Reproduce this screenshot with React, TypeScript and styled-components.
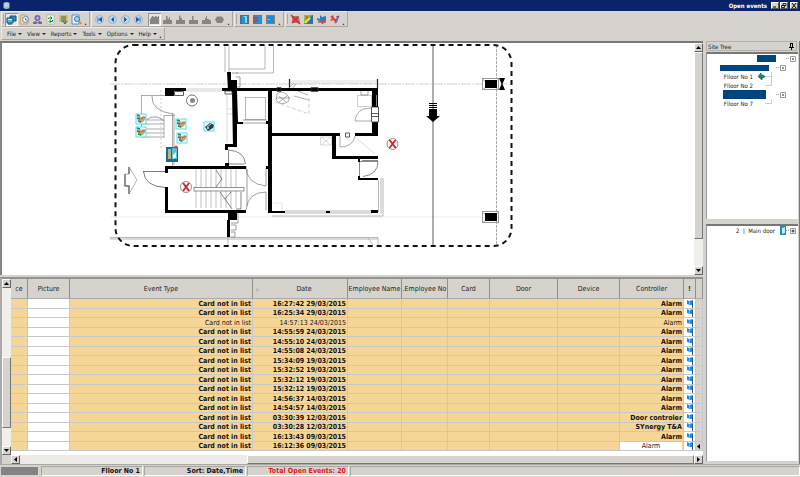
import React from "react";
import styled, { createGlobalStyle, css } from "styled-components";

const FACE = "#d6d3ce";
const NAVY = "#0a246a";

const GlobalStyle = createGlobalStyle`
  * { box-sizing: border-box; }
  body { margin: 0; background: ${FACE}; }
  body, button, table, input { font-family: "DejaVu Sans Condensed", "DejaVu Sans", sans-serif; font-size: 7px; color: #222; }
  button { border: 0; padding: 0; background: none; }
  svg { display: block; }
`;

const Window = styled.div`
  display: flex;
  flex-direction: column;
  min-height: 100vh;
  background: ${FACE};
`;

const TitleBar = styled.header`
  display: flex;
  align-items: center;
  height: 11px;
  padding: 0 2px;
  background: ${NAVY};
  color: #fff;
`;

const Title = styled.h1`
  flex: 1;
  margin: 0 3px 0 0;
  text-align: right;
  font-size: 6px;
  line-height: 11px;
`;

const CaptionButton = styled.button<{ $gap?: boolean }>`
  width: 8px;
  height: 7px;
  margin-left: ${(p) => (p.$gap ? 2 : 1)}px;
  background: ${FACE};
  border: 1px solid;
  border-color: #fff #555 #555 #fff;
`;

const Bars = styled.div`
  display: flex;
  flex-direction: column;
  align-items: flex-start;
  height: 30px;
`;

const BarRow = styled.div`
  display: flex;
  gap: 1px;
  padding-left: 1px;
`;

const ToolGroup = styled.div<{ $menu?: boolean }>`
  display: flex;
  align-items: center;
  height: ${(p) => (p.$menu ? 13 : 16)}px;
  padding: 0 1px;
  border: 1px solid;
  border-color: #eeece8 #aaa7a2 #aaa7a2 #eeece8;
`;

const Grip = styled.span`
  width: 1px;
  height: 10px;
  margin-right: 1px;
  background: #aaa7a2;
`;

const ToolButton = styled.button<{ $pressed?: boolean }>`
  display: flex;
  align-items: center;
  justify-content: center;
  width: 13px;
  height: 13px;
  ${(p) =>
    p.$pressed &&
    css`
      background: #e6e4e0;
      box-shadow: inset 1px 1px #96938e, inset -1px -1px #fff;
    `}
`;

const Spacer = styled.span`
  width: 3px;
`;

const MoreButton = styled.button`
  align-self: flex-end;
  width: 5px;
  height: 6px;
  font-weight: bold;
  line-height: 4px;
`;

const MenuButton = styled.button`
  display: flex;
  align-items: center;
  gap: 2px;
  padding: 0 1px 0 4px;
  font-size: 6px;
  line-height: 10px;
  &::after {
    content: "";
    border: 2px solid transparent;
    border-top-color: #222;
    border-bottom: 0;
  }
`;

const Body = styled.main`
  display: grid;
  grid-template-columns: minmax(0, 1fr) 94px;
  gap: 3px;
  flex: 1;
`;

const Column = styled.div`
  display: flex;
  flex-direction: column;
  min-width: 0;
`;

const MapPanel = styled.section`
  display: flex;
  flex: 1;
  min-height: 0;
  border-top: 2px solid #777a74;
  border-left: 2px solid #858585;
  background: #fff;
`;

const MapView = styled.div`
  flex: 1;
  overflow: hidden;
`;

const VScroll = styled.div`
  display: flex;
  flex-direction: column;
  flex: 0 0 9px;
  background: #f0efec;
`;

const HScroll = styled.div`
  display: flex;
  height: 9px;
  background: #ecebe8;
`;

const ScrollCorner = styled.div`
  height: 9px;
  background: ${FACE};
`;

const ScrollArrow = styled.button`
  display: flex;
  align-items: center;
  justify-content: center;
  flex: 0 0 9px;
  width: 9px;
  height: 9px;
  background: ${FACE};
  border: 1px solid;
  border-color: #fff #666 #666 #fff;
`;

const Track = styled.div<{ $grow: number }>`
  flex: ${(p) => p.$grow} 1 0;
`;

const Thumb = styled(Track)`
  background: ${FACE};
  border: 1px solid;
  border-color: #fff #777 #777 #fff;
`;

const EventsPanel = styled.section`
  display: flex;
  margin-top: 2px;
  border-top: 2px solid #95938e;
  border-left: 2px solid #aaa;
`;

const GridArea = styled.div`
  flex: 1;
  min-width: 0;
  background: #fff;
`;

const GridTable = styled.table`
  width: 100%;
  table-layout: fixed;
  border-collapse: separate;
  border-spacing: 0;
  margin-bottom: 4px;
`;

const Col = styled.col<{ $w?: number }>`
  ${(p) => p.$w && `width: ${p.$w}px;`}
`;

const HeadCell = styled.th`
  height: 20px;
  padding: 0;
  background: ${FACE};
  border-right: 1px solid #8f8f8f;
  border-bottom: 1px solid #aaa;
  font-weight: normal;
  white-space: nowrap;
  overflow: hidden;
`;

const SortHead = styled.span`
  display: grid;
  grid-template-columns: 8px 1fr;
  padding-right: 0;
  &::before {
    content: "▵";
    color: #999;
  }
`;

const Row = styled.tr<{ $read?: boolean }>`
  height: 9px;
  font-weight: ${(p) => (p.$read ? "normal" : "bold")};
  &:nth-child(odd) { height: 10px; }
`;

const Cell = styled.td<{ $tone?: "white" | "face" }>`
  padding: 0 1px 0 0;
  background: ${(p) => (p.$tone === "white" ? "#fff" : p.$tone === "face" ? FACE : "#f6d696")};
  border-right: 1px solid #c8c8c8;
  border-bottom: 1px solid #c8c8c8;
  text-align: right;
  line-height: 8px;
  white-space: nowrap;
  overflow: hidden;
  color: ${(p) => (p.$tone ? "#333" : "#111")};
`;

const CellInput = styled.input`
  display: block;
  width: 100%;
  height: 8px;
  padding: 0;
  border: 0;
  background: #fff;
  text-align: center;
`;

const Side = styled.aside`
  display: flex;
  flex-direction: column;
  border-right: 1px solid #777;
`;

const PaneTitle = styled.h2`
  display: flex;
  align-items: center;
  justify-content: space-between;
  height: 10px;
  margin: 0 2px 1px 0;
  padding: 0 2px 0 1px;
  border: 1px solid #b3b0ab;
  font-size: 6px;
  font-weight: normal;
`;

const TreePane = styled.div<{ $grow?: boolean }>`
  flex: ${(p) => (p.$grow ? 1 : "0 0 167px")};
  margin: 0 1px ${(p) => (p.$grow ? 3 : 5)}px 0;
  border-top: 2px solid #777;
  border-left: 1px solid #999;
  background: #fff;
`;

const Tree = styled.ul`
  margin: 0;
  padding: 0 2px 0 0;
  list-style: none;
  font-size: 6px;
`;

const TreeItem = styled.li<{ $indent?: number }>`
  display: flex;
  align-items: center;
  justify-content: flex-end;
  height: 9px;
  padding-right: ${(p) => p.$indent ?? 0}px;
`;

const Redacted = styled.span<{ $w: number; $h: number; $gap: number }>`
  width: ${(p) => p.$w}px;
  height: ${(p) => p.$h}px;
  margin-right: ${(p) => p.$gap}px;
  background: #00457c;
`;

const FloorName = styled.span<{ $gap: number }>`
  margin-right: ${(p) => p.$gap}px;
`;

const StatusBar = styled.footer`
  display: grid;
  grid-template-columns: 40px 102px 102px 102px 1fr;
  align-items: center;
  gap: 1px;
  height: 13px;
  border-top: 1px solid #aaa8a3;
`;

const StatusCell = styled.div<{ $alert?: boolean }>`
  height: 10px;
  padding-right: 2px;
  border: 1px solid;
  border-color: #a9a6a1 #fff #fff #a9a6a1;
  color: ${(p) => (p.$alert ? "#e01818" : "#111")};
  font-weight: bold;
  line-height: 8px;
  text-align: right;
  white-space: nowrap;
`;

const Progress = styled.div`
  height: 8px;
  margin: 0 2px 0 1px;
  background: #848284;
`;

const Arrow = ({ dir }: { dir: "up" | "down" | "left" | "right" }) => {
  const d = { up: "M0 4L2.5 1L5 4z", down: "M0 1L2.5 4L5 1z", left: "M4 0L1 2.5L4 5z", right: "M1 0L4 2.5L1 5z" }[dir];
  return (
    <svg width="5" height="5"><path d={d} fill="#000" /></svg>
  );
};

const Icon = ({ children }: { children: React.ReactNode }) => (
  <svg width="11" height="11" viewBox="0 0 11 11">{children}</svg>
);

const viewIcons: [string, React.ReactNode][] = [
  ["Open events", <><path d="M4 2h6v5H4z" fill="#2b8fc8" stroke="#174e76" /><path d="M1 4h6v5H1z" fill="#49bed1" stroke="#174e76" /><path d="M2 5.500h4" stroke="#c9f1f5" /><path d="M2 10h4" stroke="#333" /></>],
  ["Event log", <><path d="M2 1h5l2 2v7H1z" fill="#f1dfa0" stroke="#c9a75b" /><circle cx="6.5" cy="5.5" r="3" fill="#edf5ff" stroke="#6584b2" /><path d="M6.500 4v2h2" fill="none" stroke="#345" strokeWidth=".7" /></>],
  ["Users", <><circle cx="5.500" cy="4" r="3" fill="#7567b5" /><circle cx="5.500" cy="4" r="1.200" fill="#c9c0ec" /><path d="M1 10V8l3-1 1.500 1.500L7 7l3 1v2H7L5.500 9 4 10z" fill="#776b86" /></>],
  ["Refresh", <><path d="M2 1h7v9H2z" fill="#effbef" stroke="#8cb792" strokeWidth=".7" /><path d="M3.500 5V4h3M5.500 2.500L7 4 5.500 5.500M7.500 6v1.500h-3M5.500 6L4 7.500 5.500 9" stroke="#138a33" fill="none" /></>],
  ["Door", <><path d="M1 1h9v7H1z" fill="#e9bc36" /><path d="M3 2h3v6H3z" fill="#4e9ccf" /><path d="M7 2v7M5 7l2 3 2-3" stroke="#37713c" fill="none" /></>],
  ["Find", <><path d="M1 1h7v9H1z" fill="#e6f2ff" stroke="#4773b8" strokeWidth=".8" /><circle cx="6" cy="5" r="2.500" fill="#9edcf2" stroke="#4170a2" /><path d="M8 7l2.500 3" stroke="#e08432" strokeWidth="1.500" /></>],
];

const navPaths: [string, string][] = [
  ["First", "M4 3.500v4M7.500 3.500L5 5.500l2.500 2z"],
  ["Previous", "M6.500 3.500L4.500 5.500l2 2z"],
  ["Next", "M4.500 3.500l2 2-2 2z"],
  ["Last", "M7 3.500v4M3.500 3.500L6 5.500l-2.500 2z"],
];

const handPaths = [
  "M0 5h2V3h1V2h1.500v1H6V2h1.500v1H9V2h1v8H1V6z",
  "M1 6h3V2h1.500v3H7V3h1v3h2v4H1z",
  "M1 6h3V1.500h1.500V4H7v2h3v4H1z",
  "M1 6h3V2h1.500v4H10v4H1z",
  "M1 6h3V4h1V2h1v3h2v1h2v4H1z",
  "M3 2.500h5L10 5.500 8 9H3L1 5.500z",
];

const doorIcons: [string, React.ReactNode][] = [
  ["Open door", <><path d="M1 1h9v9H1z" fill="#616b77" /><path d="M4 2h4v7H4z" fill="#89d8fa" /><path d="M3 2l3 1v7L3 9z" fill="#149ae1" /></>],
  ["Lock door", <><path d="M1 1h9v9H1z" fill="#70747a" /><path d="M4 2h5v7H4z" fill="#2694d7" /><path d="M1 4h5M1 7h5M4 3l2 2-2 3" stroke="#cf3139" fill="none" /></>],
  ["Close door", <><path d="M1 1h9v9H1z" fill="#8a7c70" /><path d="M3 2h6v7H3z" fill="#178cdb" /><path d="M4 5v1" stroke="#fff" /></>],
];

const alarmIcons: [string, React.ReactNode][] = [
  ["Cancel alarm", <><path d="M2 2h7l1 7H2z" fill="#947d7c" /><path d="M1 1l9 9M8 3L2 9" stroke="#ef2222" strokeWidth="1.700" /></>],
  ["Map alarm", <><path d="M1 1h9v9H1z" fill="#7cc357" /><path d="M1 10l8-9h1v9z" fill="#2d72ad" /><path d="M3 2h2v3H3z" fill="#e55134" /><path d="M2 9l5-5" stroke="#eee348" strokeWidth="2" /></>],
  ["Device alarm", <><path d="M4 1l2 2 4-1v5L6 8 1 6V4l3 1z" fill="#287fbe" /><path d="M2 8h8M6 10l3-4" stroke="#dc3f42" strokeWidth="1.500" /></>],
  ["Confirm alarm", <><path d="M1 3l3-2 1 3 2 1 3-4-4 9-1-4-4 1 2-3z" fill="#ea3935" /><path d="M7 3l3-1-3 7" stroke="#4b5fa5" fill="none" /></>],
];

const Tools = ({ items }: { items: [string, React.ReactNode][] }) => (
  <>
    {items.map(([label, art]) => (
      <ToolButton key={label} aria-label={label} $pressed={label === "Open events"}><Icon>{art}</Icon></ToolButton>
    ))}
  </>
);

const HandReader = ({ x, y }: { x: number; y: number }) => (
  <g transform={`translate(${x} ${y})`}>
    <rect width="10" height="10" fill="#eaffff" stroke="#53dfe2" />
    <path d="M1 2l4 1 3-1 2 2-2 3-3 2-3-2z" fill="#cda276" />
    <path d="M1 1l3 1M1 4l3 1M2 7l3 1" stroke="#367e69" strokeWidth="1.500" />
    <path d="M5 5l4-2" stroke="#81583c" strokeWidth=".7" />
  </g>
);

const Disabled = ({ x, y }: { x: number; y: number }) => (
  <g transform={`translate(${x} ${y})`}>
    <circle r="5.500" fill="#fff" stroke="#777" strokeWidth=".8" />
    <path d="M-3-4L3 4M3-4L-3 4" stroke="#dc2229" strokeWidth="1.800" />
    <path d="M-2-4L4 4" stroke="#444" strokeWidth=".4" />
  </g>
);

const FloorPlan = () => (
  <svg width="691" height="232" viewBox="2 43 691 232" role="img" aria-label="Floor plan">
    <g fill="none" stroke="#bbb" strokeWidth=".7">
      <path d="M110 84h117M237 84h270" strokeDasharray="10 1 2 1" />
      <path d="M110 217h115M240 217h245" stroke="#e4e4e4" />
      <path d="M496.500 45v201" stroke="#888" strokeDasharray="3 1" />
      <path d="M225 45v27M229 45v27M229 69h36V45M273.500 45v28H236" stroke="#999" />
      <path d="M161 90v60" strokeDasharray="2 2" />
      <path d="M186 89h36M186 91h36" />
      <path d="M141.500 95.500v42M141 95.500h32M164 115.500h10v-2M172.500 113v54M174 115v50M164 115v23M142 120h22M142 124h22M142 129h22M142 133h22M142 137h22" stroke="#888" />
      <path d="M152 96q-1 15 21 18M146 120q10-7 18 1" stroke="#777" />
      <path d="M227 95v48M233 95v48M227 109h6M227 114h6" stroke="#ccc" />
      <rect x="245.500" y="97.500" width="20" height="22" stroke="#999" />
      <path d="M243 120h24M243 123h24" stroke="#777" />
      <path d="M228.500 150v14h16M228.500 150q16 1 17 14" stroke="#555" />
      <path d="M143 171.500h22M143.500 171.500q1 15 22 16" stroke="#444" />
      <path d="M196 169v39M201 169v39M206 169v39M211 169v39M216 169v39M221 169v39M226 169v39M231 169v39M236 169v39" stroke="#aaa" />
      <rect x="194" y="187.500" width="50" height="3.500" fill="#fff" stroke="#666" />
      <path d="M216 170l6 9-6 8M220 192l12 17M231 192l-6 7M241 192v17h-5" stroke="#555" />
      <path d="M246 166q0 18 20 20v-18M246 210q2-18 20-18v18M247 169v37" stroke="#777" />
      <path d="M236 77h4v10h-8M232 73h6M238 213v10h-7M231 225h5v5h-5M231 232h4v5h-4" stroke="#777" />
      <path d="M110 237.500h268v8M110 239h268M368 238l5 7M228 237v9" stroke="#999" />
      <path d="M289 81h89M290 83h88" stroke="#ccc" />
      <path d="M289.500 79v9M377.500 79v9" stroke="#222" strokeWidth="1.200" />
      <path d="M277 94q4-4 9 0t2 8q-8 4-12-2zM279 96l7 6M287 96l-8 6M276 98h14M290 91l6-7M286 91l8-8M294 96l15 4M298 91l10 4" stroke="#888" />
      <path d="M275 102l34 12V98" strokeDasharray="4 2" />
      <rect x="357.500" y="95.500" width="14" height="11" /><path d="M361 91v4h7v-4" stroke="#777" />
      <path d="M371 108q-15 0-16 13h16M340 136v11q13 0 15-11" stroke="#888" />
      <path d="M355 137l20 17M320.500 137h11v8h-11zM321 137l10 8M331 137l-10 8" stroke="#ccc" />
      <path d="M360 161.500h18q0 13-15 15M359.500 161v15M362 160.500h16" stroke="#555" />
      <path d="M378.500 180v32M383 178v38H272M381 178v36M285 211h87M285 213h87" stroke="#999" />
      <path d="M273 203h9v8" stroke="#ddd" />
    </g>
    <g fill="#000">
      <path d="M165 88h9v8h-9zM165 88h21v3h-21zM222 88h156v3H222zM227 72h4v8h6v11h-9zM232 91h5l1 31h5v2h-6v23h-9v3h-3v-6h8z" />
      <path d="M165 166h81v3h-78v4h-3zM165 187h3v23h78v3h-81zM225 163h4v4h-4zM268 90h4v121h13v2h-17zM266 121h3v3h-3zM266 166h3v3h-3z" />
      <path d="M228 213h9v7h-7v17h-3v-17h1zM372 88h6v19h-6zM372 122h6v14h-23v-3h17zM270 133h70v3h-4v20h42v3h-46v-23h-62zM358 159h2v3h-2zM358 176h2v2h18v2h-20zM371 210h7v3h-7zM326 211h4v2h-4z" />
    </g>
    <g fill="#fff" stroke="#333" strokeWidth=".8">
      <path d="M174.500 91.500h9v4h-9zM225 91h7v3h-7zM345.500 133h4v4h-4zM371.500 107h7v15h-7zM371.500 113.500h7v3h-7z" /><path d="M376.500 95v11" stroke="#aaa" />
      <path d="M311 87.500h7v4h-7zM277 87.500h4v4h-4z" fill="none" />
    </g>
    <circle cx="192" cy="100.500" r="5.500" fill="#fff" stroke="#777" /><circle cx="192.500" cy="100.500" r="2.500" fill="#888" />
    <path d="M125 174h4v-7l8 13-8 14v-8h-4z" fill="#fff" stroke="#999" strokeWidth=".7" />
    <path d="M125 174v12h4v8M129 167v7" fill="none" stroke="#777" strokeWidth="1.500" />
    <HandReader x={136} y={114} /><HandReader x={136} y={127} /><HandReader x={176} y={119} /><HandReader x={177} y={133} />
    <rect x="204" y="122" width="10" height="9" fill="#e9ffff" stroke="#53dfe2" />
    <path d="M205 127l5-4 4 2-1 3-5 3z" fill="#353a4d" /><path d="M207 127l4-3" stroke="#c7cadb" /><circle cx="208" cy="128" r="1" fill="#d9e5ef" />
    <path d="M166 147h12v15h-12z" fill="#176d98" /><path d="M168 149h3v10h-3z" fill="#b4b77b" /><path d="M172 148h5v11h-5z" fill="#54c3df" /><path d="M173 155l3-3v5l-3 2z" fill="#fff" /><circle cx="176" cy="147" r="1.500" fill="#e43b2e" />
    <Disabled x={186} y={187} /><Disabled x={392.500} y={144} />
    <path d="M433 45v201" stroke="#333" strokeWidth=".8" /><path d="M429 103.500h8M429 105.500h8M429 107.500h8" stroke="#000" /><path d="M429 109h8v7h3l-7 6-7-6h3z" />
    {[78, 211].map((y) => (
      <g key={y}><rect x="482.500" y={y + 0.5} width="16" height="11" fill="#fff" stroke="#999" /><path d={`M482 ${y + 1}l3 2M499 ${y + 1}l-3 2M482 ${y + 12}l3-2M499 ${y + 12}l-3-2`} stroke="#aaa" /><rect x="485" y={y + 2} width="12" height="8" /></g>
    ))}
    <path d="M499 78h6l-2.500 6 2.500 6h-6l2.500-6z" />
    <rect x="115.500" y="45" width="396" height="201" rx="18" fill="none" stroke="#111" strokeWidth="2" strokeDasharray="5 4" />
  </svg>
);

const Toggle = ({ open }: { open?: boolean }) => (
  <svg width="10" height="9"><path d="M0 4.500h4" stroke="#aaa" strokeDasharray="1 1" /><path d="M4.500 2.500h5v5h-5z" fill="#fff" stroke="#999" /><path d={open ? "M6 5h2" : "M5.500 5h3M7 3.500v3"} stroke="#222" /></svg>
);

const Branch = ({ last }: { last?: boolean }) => (
  <svg width="7" height="9"><path d={last ? "M0 4.500h6.500V0" : "M0 4.500h6.500M6.500 0v9"} fill="none" stroke="#ccc" /></svg>
);

const Flag = () => (
  <svg width="10" height="8"><path d="M3 0l2 1 4-1v5L6 5 3 4z" fill="#218be6" /><path d="M5.500 1v4" stroke="#8cccff" strokeWidth=".7" /><path d="M8.500 1v7" stroke="#285b96" /></svg>
);

const columns: [string, number?][] = [
  ["ce", 17], ["Picture", 42], ["Event Type"], ["Date", 95], ["Employee Name", 54], [".Employee No", 46],
  ["Card", 42], ["Door", 68], ["Device", 62], ["Controller", 64], ["!", 12], ["", 7],
];

const events: [string, string][] = [
  ["16:27:42 29/03/2015", "Alarm"], ["16:25:34 29/03/2015", "Alarm"], ["14:57:13 24/03/2015", "Alarm"],
  ["14:55:59 24/03/2015", "Alarm"], ["14:55:10 24/03/2015", "Alarm"], ["14:55:08 24/03/2015", "Alarm"],
  ["15:34:09 19/03/2015", "Alarm"], ["15:32:52 19/03/2015", "Alarm"], ["15:32:12 19/03/2015", "Alarm"],
  ["15:32:12 19/03/2015", "Alarm"], ["14:56:37 14/03/2015", "Alarm"], ["14:54:57 14/03/2015", "Alarm"],
  ["03:30:39 12/03/2015", "Door controler"], ["03:30:28 12/03/2015", "SYnergy T&A"],
  ["16:13:43 09/03/2015", "Alarm"], ["16:12:36 09/03/2015", "Alarm"],
];

const EventGrid = () => (
  <GridTable>
    <colgroup>{columns.map(([, w], i) => <Col key={i} $w={w} />)}</colgroup>
    <thead>
      <tr>
        {columns.map(([name], i) => (
          <HeadCell key={i} scope="col">
            {name === "Date" ? <SortHead>{name}</SortHead> : name === "!" ? <b>!</b> : name}
          </HeadCell>
        ))}
      </tr>
    </thead>
    <tbody>
      {events.map(([date, controller], i) => {
        const current = i === events.length - 1;
        return (
          <Row key={i} $read={i === 2}>
            <Cell /><Cell $tone="white" /><Cell>Card not in list</Cell><Cell>{date}</Cell>
            <Cell /><Cell /><Cell /><Cell /><Cell />
            <Cell>{current ? <CellInput aria-label="Controller" defaultValue={controller} /> : controller}</Cell>
            <Cell $tone="white"><Flag /></Cell>
            <Cell $tone="face">{current && <Arrow dir="left" />}</Cell>
          </Row>
        );
      })}
    </tbody>
  </GridTable>
);

export default function App() {
  return (
    <Window>
      <GlobalStyle />
      <TitleBar>
        <svg width="9" height="9"><path d="M1.500 2q3-2 6 0v5q-3 2-6 0z" fill="#9cb9d3" /><path d="M2 3h5M2 5h5" stroke="#e4f2f8" strokeWidth=".7" /></svg>
        <Title>Open events</Title>
        <CaptionButton aria-label="Minimize"><svg width="6" height="5"><path d="M1 4h3" stroke="#000" /></svg></CaptionButton>
        <CaptionButton aria-label="Restore"><svg width="6" height="5"><path d="M2 .5h3v2H2zM.5 2.500h3v2h-3z" fill="none" stroke="#000" strokeWidth=".8" /></svg></CaptionButton>
        <CaptionButton aria-label="Close" $gap><svg width="6" height="5"><path d="M1 0l4 5M5 0L1 5" stroke="#000" /></svg></CaptionButton>
      </TitleBar>
      <Bars>
        <BarRow>
          <ToolGroup><Grip /><Tools items={viewIcons} /><MoreButton aria-label="More view tools">.</MoreButton></ToolGroup>
          <ToolGroup>
            {navPaths.map(([label, d]) => (
              <ToolButton key={label} aria-label={label}>
                <Icon><circle cx="5.500" cy="5.500" r="4" fill="#b9daf1" stroke="#8fa9c2" strokeWidth=".8" /><path d={d} fill="#164f9b" stroke="#164f9b" strokeWidth=".8" /></Icon>
              </ToolButton>
            ))}
            <Spacer />
            {handPaths.map((d, i) => (
              <ToolButton key={d} aria-label={`Level ${i + 1}`} $pressed={i === 0}><Icon><path d={d} fill="#858585" /></Icon></ToolButton>
            ))}
            <MoreButton aria-label="More level tools">.</MoreButton>
          </ToolGroup>
          <ToolGroup><Grip /><Tools items={doorIcons} /><MoreButton aria-label="More door tools">.</MoreButton></ToolGroup>
          <ToolGroup><Grip /><Tools items={alarmIcons} /><MoreButton aria-label="More alarm tools">.</MoreButton></ToolGroup>
        </BarRow>
        <BarRow as="nav">
          <ToolGroup $menu>
            {["File", "View", "Reports", "Tools", "Options", "Help"].map((m) => <MenuButton key={m}>{m}</MenuButton>)}
            <MoreButton aria-label="More menus">.</MoreButton>
          </ToolGroup>
        </BarRow>
      </Bars>
      <Body>
        <Column>
          <MapPanel>
            <MapView><FloorPlan /></MapView>
            <VScroll>
              <ScrollArrow aria-label="Scroll map up"><Arrow dir="up" /></ScrollArrow>
              <Thumb $grow={187} /><Track $grow={27} />
              <ScrollArrow aria-label="Scroll map down"><Arrow dir="down" /></ScrollArrow>
            </VScroll>
          </MapPanel>
          <EventsPanel>
            <VScroll>
              <ScrollArrow aria-label="Scroll events up"><Arrow dir="up" /></ScrollArrow>
              <Track $grow={69} /><Thumb $grow={70} /><Track $grow={18} />
              <ScrollArrow aria-label="Scroll events down"><Arrow dir="down" /></ScrollArrow>
              <ScrollCorner />
            </VScroll>
            <GridArea>
              <EventGrid />
              <HScroll>
                <ScrollArrow aria-label="Scroll events left"><Arrow dir="left" /></ScrollArrow>
                <Track $grow={228} /><Thumb $grow={446} />
                <ScrollArrow aria-label="Scroll events right"><Arrow dir="right" /></ScrollArrow>
              </HScroll>
            </GridArea>
          </EventsPanel>
        </Column>
        <Side>
          <PaneTitle>Site Tree<svg width="5" height="7"><path d="M1.500 0v4M3.500 0v4M0 4.500h5M2.500 4v3M1 .5h3" stroke="#000" fill="none" /></svg></PaneTitle>
          <TreePane>
            <Tree>
              <TreeItem><Redacted $w={19} $h={7} $gap={10} /><Toggle open /></TreeItem>
              <TreeItem $indent={10}><Redacted $w={49} $h={6} $gap={7} /><Toggle open /></TreeItem>
              <TreeItem $indent={24}><FloorName $gap={5}>Flloor No 1</FloorName><svg width="7" height="7"><path d="M0 3.500L3 0v2h2l2 1.500L5 5H4v2z" fill="#188378" stroke="#124a48" strokeWidth=".6" /></svg><Branch /></TreeItem>
              <TreeItem $indent={24}><FloorName $gap={12}>Flloor No 2</FloorName><Branch last /></TreeItem>
              <TreeItem $indent={10}><Redacted $w={43} $h={9} $gap={10} /><Toggle open /></TreeItem>
              <TreeItem $indent={24}><FloorName $gap={12}>Flloor No 7</FloorName><Branch last /></TreeItem>
            </Tree>
          </TreePane>
          <TreePane $grow>
            <Tree>
              <TreeItem><FloorName $gap={5}>2 &nbsp;|&nbsp; Main door</FloorName><svg width="6" height="9"><path d="M0 0h6v9H0z" fill="#258ca6" /><path d="M2 2l3-1v6l-3 1z" fill="#b2edf4" /></svg><Toggle /></TreeItem>
            </Tree>
          </TreePane>
        </Side>
      </Body>
      <StatusBar>
        <Progress />
        <StatusCell>Flloor No 1</StatusCell>
        <StatusCell>Sort: Date,Time</StatusCell>
        <StatusCell $alert>Total Open Events: 20</StatusCell>
        <StatusCell />
      </StatusBar>
    </Window>
  );
}
